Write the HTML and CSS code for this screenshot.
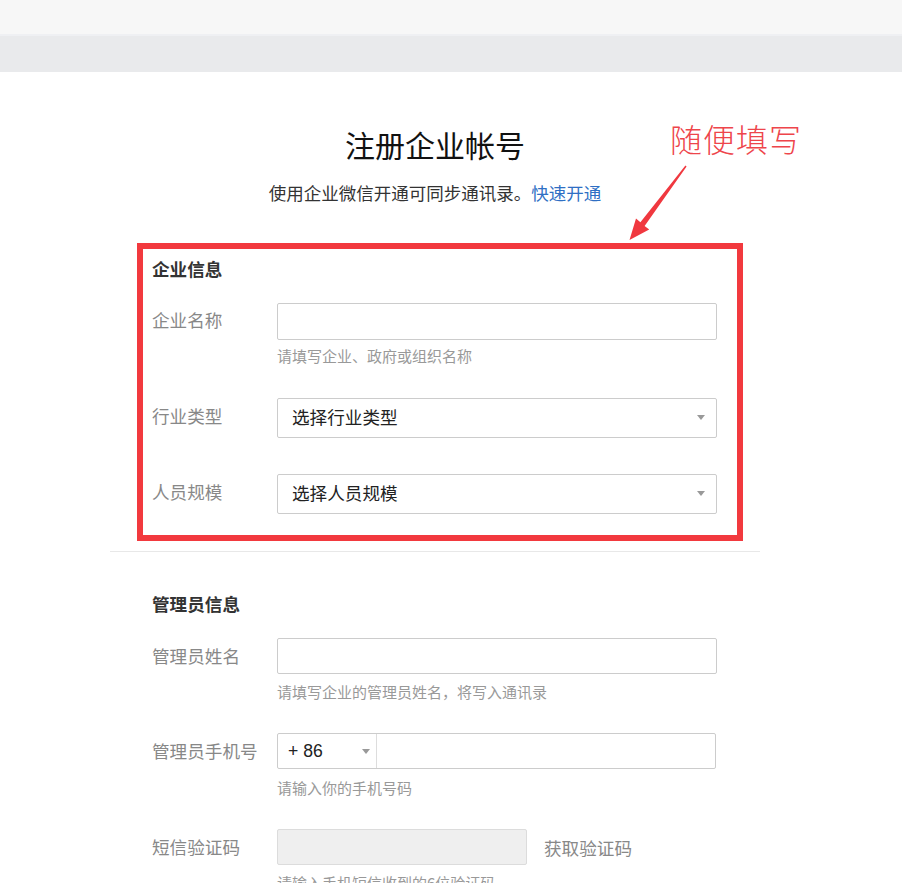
FILE: index.html
```html
<!DOCTYPE html>
<html lang="zh-CN">
<head>
<meta charset="utf-8">
<title>注册企业帐号</title>
<link rel="stylesheet" href="styles.css">
</head>
<body>
<div class="page">
  <div class="bar-top"></div>
  <div class="bar-line"></div>
  <div class="bar-sub"></div>

  <main class="main">
    <h1 class="title">注册企业帐号</h1>
    <p class="subtitle">使用企业微信开通可同步通讯录。<a class="link" href="#">快速开通</a></p>

    <section class="section section-first">
      <h2 class="section-title">企业信息</h2>
      <div class="field field-first">
        <label class="label label-h37">企业名称</label>
        <input class="input input-h37" type="text">
        <div class="hint">请填写企业、政府或组织名称</div>
      </div>
      <div class="field field-gap32">
        <label class="label label-h40">行业类型</label>
        <div class="select"><span class="select-text">选择行业类型</span><span class="caret"></span></div>
      </div>
      <div class="field field-gap36">
        <label class="label label-h40">人员规模</label>
        <div class="select"><span class="select-text">选择人员规模</span><span class="caret"></span></div>
      </div>
    </section>

    <div class="divider"></div>

    <section class="section section-second">
      <h2 class="section-title">管理员信息</h2>
      <div class="field field-first">
        <label class="label label-h36">管理员姓名</label>
        <input class="input input-h36" type="text">
        <div class="hint hint-gap8">请填写企业的管理员姓名，将写入通讯录</div>
      </div>
      <div class="field field-gap31">
        <label class="label label-h36">管理员手机号</label>
        <div class="phone">
          <div class="phone-code"><span class="phone-code-text">+ 86</span><span class="caret"></span></div>
          <input class="phone-input" type="text">
        </div>
        <div class="hint hint-gap9">请输入你的手机号码</div>
      </div>
      <div class="field field-gap31">
        <label class="label label-h36">短信验证码</label>
        <div class="sms">
          <input class="sms-input" type="text" disabled>
          <span class="sms-btn">获取验证码</span>
        </div>
        <div class="hint hint-gap8">请输入手机短信收到的6位验证码</div>
      </div>
    </section>
  </main>

  <div class="annot-box"></div>
  <div class="annot-text">随便填写</div>
  <svg class="annot-arrow" width="80" height="90" viewBox="620 160 80 90" aria-hidden="true">
    <polygon fill="#f0383f" points="685.4,165.6 686.6,166.4 644.6,225.9 649.2,229.4 629.5,240 636,218.6 640.4,222.3"/>
  </svg>
</div>
</body>
</html>
```

FILE: styles.css
```css
html, body {
  margin: 0;
  padding: 0;
  background: #ffffff;
}

body {
  font-family: "Noto Sans CJK SC", "Microsoft YaHei", sans-serif;
  color: #333333;
}

.page {
  position: relative;
  width: 902px;
  min-height: 883px;
  overflow: hidden;
}

.bar-top {
  height: 34px;
  background: #f7f7f7;
}

.bar-line {
  height: 2px;
  background: #eff0f3;
}

.bar-sub {
  height: 36px;
  background: #e9eaec;
}

.main {
  width: 650px;
  margin-left: 110px;
}

.title {
  margin: 52px 0 0;
  font-size: 30px;
  line-height: 40px;
  font-weight: normal;
  color: #111111;
  text-align: center;
}

.subtitle {
  margin: 17px 0 0;
  font-size: 17.5px;
  line-height: 24px;
  color: #333333;
  text-align: center;
}

.link {
  color: #2f6fc4;
  text-decoration: none;
}

.section {
  padding-left: 42px;
}

.section-first {
  padding-top: 52px;
  padding-bottom: 37px;
}

.section-second {
  padding-top: 40px;
}

.section-title {
  margin: 0;
  font-size: 17.6px;
  line-height: 24px;
  font-weight: bold;
  color: #333333;
}

.field {
  display: grid;
  grid-template-columns: 125px 440px;
  align-items: start;
}

.field-first { margin-top: 22px; }
.field-gap31 { margin-top: 31px; }
.field-gap32 { margin-top: 32px; }
.field-gap36 { margin-top: 36px; }

.label {
  grid-column: 1;
  font-size: 17.6px;
  color: #888888;
  white-space: nowrap;
}

.label-h36 { line-height: 36px; }
.label-h37 { line-height: 34px; }
.label-h40 { line-height: 36px; }

.input {
  grid-column: 2;
  display: block;
  box-sizing: border-box;
  width: 440px;
  margin: 0;
  padding: 0 12px;
  border: 1px solid #cccccc;
  border-radius: 2px;
  background: #ffffff;
  font: inherit;
  outline: none;
}

.input-h36 { height: 36px; }
.input-h37 { height: 37px; }

.hint {
  grid-column: 2;
  margin-top: 6px;
  font-size: 15px;
  line-height: 20px;
  color: #999999;
  white-space: nowrap;
}

.hint-gap8 { margin-top: 8px; }
.hint-gap9 { margin-top: 9px; }

.select {
  grid-column: 2;
  box-sizing: border-box;
  width: 440px;
  height: 40px;
  display: flex;
  align-items: center;
  justify-content: space-between;
  padding: 0 11px 4px 14px;
  border: 1px solid #cccccc;
  border-radius: 2px;
  background: #ffffff;
}

.select-text {
  font-size: 17.6px;
  color: #222222;
}

.caret {
  width: 0;
  height: 0;
  border-left: 4px solid transparent;
  border-right: 4px solid transparent;
  border-top: 5px solid #999999;
}

.select .caret {
  margin-top: 3px;
}

.divider {
  height: 1px;
  background: #e8e8e8;
}

.phone {
  grid-column: 2;
  box-sizing: border-box;
  width: 439px;
  height: 36px;
  display: flex;
  border: 1px solid #cccccc;
  border-radius: 2px;
  background: #ffffff;
}

.phone-code {
  box-sizing: border-box;
  width: 99px;
  display: flex;
  align-items: center;
  justify-content: space-between;
  padding: 0 6px 0 10px;
  border-right: 1px solid #dddddd;
}

.phone-code-text {
  font-family: "Liberation Sans", Arial, sans-serif;
  font-size: 17.6px;
  color: #222222;
}

.phone-input {
  flex: 1;
  min-width: 0;
  margin: 0;
  padding: 0 10px;
  border: 0;
  background: transparent;
  font: inherit;
  outline: none;
}

.sms {
  grid-column: 2;
  display: flex;
  align-items: center;
  gap: 17px;
}

.sms-input {
  box-sizing: border-box;
  width: 250px;
  height: 36px;
  margin: 0;
  border: 1px solid #dcdcdc;
  border-radius: 2px;
  background: #efefef;
  font: inherit;
}

.sms-btn {
  font-size: 17.6px;
  color: #888888;
  white-space: nowrap;
}

/* annotation overlay */
.annot-box {
  position: absolute;
  left: 137px;
  top: 243px;
  width: 606px;
  height: 298px;
  box-sizing: border-box;
  border: 6px solid #f2393e;
  pointer-events: none;
}

.annot-text {
  position: absolute;
  left: 670px;
  top: 118px;
  font-size: 32px;
  line-height: 40px;
  font-weight: 300;
  color: #ee454b;
  letter-spacing: 1px;
  white-space: nowrap;
}

.annot-arrow {
  position: absolute;
  left: 620px;
  top: 160px;
}
```
